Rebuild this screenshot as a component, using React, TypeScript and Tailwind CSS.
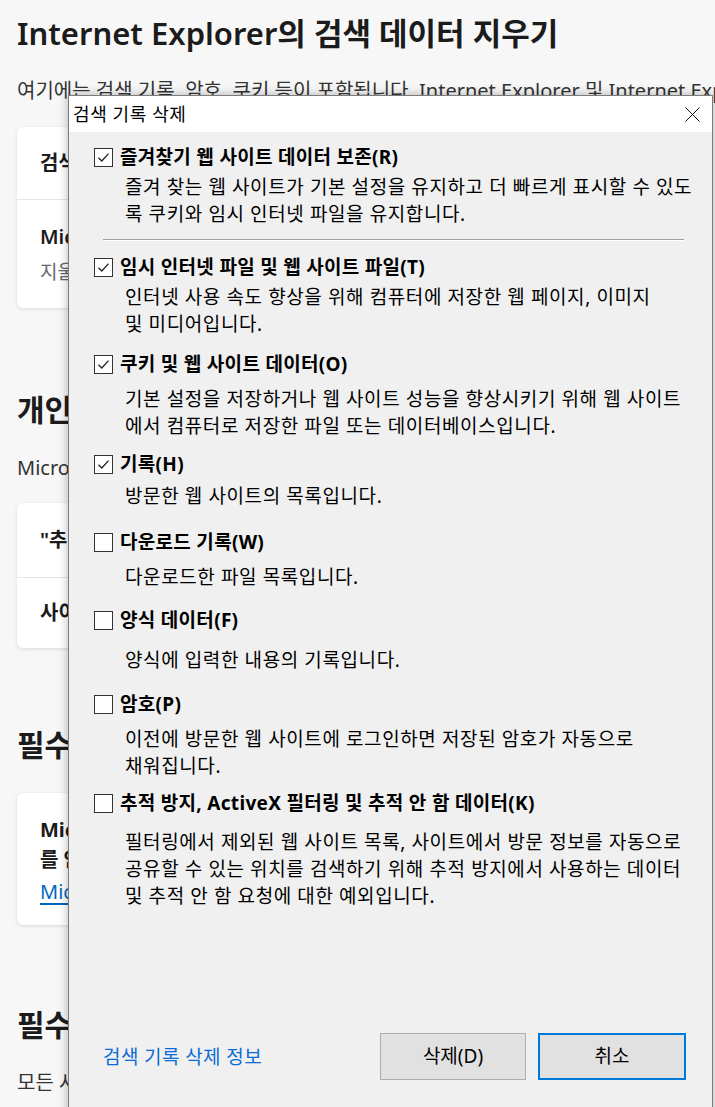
import React from 'react';

type Item = {
  label: string;
  checked: boolean;
  lines: string[];
  rowGap: string;
  descGap: string;
};

const items: Item[] = [
  {
    label: '즐겨찾기 웹 사이트 데이터 보존(R)',
    checked: true,
    lines: [
      '즐겨 찾는 웹 사이트가 기본 설정을 유지하고 더 빠르게 표시할 수 있도',
      '록 쿠키와 임시 인터넷 파일을 유지합니다.',
    ],
    rowGap: 'mt-[13px]',
    descGap: 'mt-[5px]',
  },
  {
    label: '임시 인터넷 파일 및 웹 사이트 파일(T)',
    checked: true,
    lines: ['인터넷 사용 속도 향상을 위해 컴퓨터에 저장한 웹 페이지, 이미지', '및 미디어입니다.'],
    rowGap: 'mt-[14px]',
    descGap: 'mt-[5px]',
  },
  {
    label: '쿠키 및 웹 사이트 데이터(O)',
    checked: true,
    lines: [
      '기본 설정을 저장하거나 웹 사이트 성능을 향상시키기 위해 웹 사이트',
      '에서 컴퓨터로 저장한 파일 또는 데이터베이스입니다.',
    ],
    rowGap: 'mt-[14px]',
    descGap: 'mt-[10px]',
  },
  {
    label: '기록(H)',
    checked: true,
    lines: ['방문한 웹 사이트의 목록입니다.'],
    rowGap: 'mt-[12px]',
    descGap: 'mt-[7px]',
  },
  {
    label: '다운로드 기록(W)',
    checked: false,
    lines: ['다운로드한 파일 목록입니다.'],
    rowGap: 'mt-[20px]',
    descGap: 'mt-[10px]',
  },
  {
    label: '양식 데이터(F)',
    checked: false,
    lines: ['양식에 입력한 내용의 기록입니다.'],
    rowGap: 'mt-[17px]',
    descGap: 'mt-[15px]',
  },
  {
    label: '암호(P)',
    checked: false,
    lines: ['이전에 방문한 웹 사이트에 로그인하면 저장된 암호가 자동으로', '채워집니다.'],
    rowGap: 'mt-[18px]',
    descGap: 'mt-[10px]',
  },
  {
    label: '추적 방지, ActiveX 필터링 및 추적 안 함 데이터(K)',
    checked: false,
    lines: [
      '필터링에서 제외된 웹 사이트 목록, 사이트에서 방문 정보를 자동으로',
      '공유할 수 있는 위치를 검색하기 위해 추적 방지에서 사용하는 데이터',
      '및 추적 안 함 요청에 대한 예외입니다.',
    ],
    rowGap: 'mt-[11px]',
    descGap: 'mt-[14px]',
  },
];

function CheckBox({ checked }: { checked: boolean }) {
  return (
    <span className="flex h-[19px] w-[19px] shrink-0 items-center justify-center border border-[#333] bg-white">
      {checked && (
        <svg width="15" height="15" viewBox="0 0 15 15" fill="none">
          <path d="M2.5 7.8 L5.8 11 L12.5 3.6" stroke="#222" strokeWidth="1.3" />
        </svg>
      )}
    </span>
  );
}

function Option({ item, separator }: { item: Item; separator?: boolean }) {
  return (
    <div>
      <div className={`${item.rowGap} flex h-[24px] items-center pl-[25px]`}>
        <CheckBox checked={item.checked} />
        <span className="ml-[7px] whitespace-nowrap text-[19px] font-bold leading-[24px] tracking-[0.3px]">
          {item.label}
        </span>
      </div>
      <div className={`${item.descGap} pl-[56px] text-[19px] leading-[27px] tracking-[0.6px]`}>
        {item.lines.map((l) => (
          <div key={l} className="whitespace-nowrap">
            {l}
          </div>
        ))}
      </div>
      {separator && (
        <div className="ml-[34px] mt-[11px] w-[581px] border-t border-b border-t-[#a0a0a0] border-b-white" />
      )}
    </div>
  );
}

function Card({ children, className = '' }: { children: React.ReactNode; className?: string }) {
  return (
    <div className={`w-[681px] rounded-[6px] bg-white shadow-[0_1px_4px_rgba(0,0,0,0.12)] ${className}`}>
      {children}
    </div>
  );
}

export default function App() {
  return (
    <div className="relative h-[1107px] w-[715px] overflow-hidden bg-[#f7f7f7] font-['Noto_Sans','Noto_Sans_CJK_KR',sans-serif] text-[#1b1b1b]">
      {/* settings page behind the dialog */}
      <div className="pl-[17px] pt-[12px]">
        <h1 className="whitespace-nowrap text-[31px] font-semibold leading-[42px]">
          Internet Explorer의 검색 데이터 지우기
        </h1>
        <p className="mt-[24px] whitespace-nowrap text-[20px] leading-[26px] text-[#333]">
          여기에는 검색 기록, 암호, 쿠키 등이 포함됩니다. Internet Explorer 및 Internet Explorer 모드의 데이터가 지워집니다.
        </p>

        <Card className="mt-[23px]">
          <div className="flex h-[72px] items-center pl-[23px] text-[20px] font-semibold">검색 데이터 지금 지우기</div>
          <div className="border-t border-[#e5e5e5]" />
          <div className="flex h-[108px] flex-col justify-center pl-[23px]">
            <div className="whitespace-nowrap text-[20px] font-semibold leading-[28px]">
              Microsoft Edge를 닫을 때마다 Internet Explorer 검색 데이터 지우기
            </div>
            <div className="mt-[8px] whitespace-nowrap text-[19px] leading-[26px] text-[#666]">
              지울 항목을 선택하세요
            </div>
          </div>
        </Card>

        <h2 className="mt-[82px] whitespace-nowrap text-[30px] font-bold leading-[40px]">개인 정보</h2>
        <p className="mt-[25px] whitespace-nowrap text-[20px] leading-[26px] text-[#333]">
          Microsoft는 사용자의 개인 정보를 보호하고 존중합니다.
        </p>

        <Card className="mt-[22px]">
          <div className="flex h-[74px] items-center pl-[23px] text-[20px] font-semibold">"추적 안 함" 요청 보내기</div>
          <div className="border-t border-[#e5e5e5]" />
          <div className="flex h-[70px] items-center pl-[23px] text-[20px] font-semibold">
            사이트에서 저장된 결제 방법이 있는지 확인하도록 허용
          </div>
        </Card>

        <h2 className="mt-[77px] whitespace-nowrap text-[30px] font-bold leading-[40px]">필수 진단 데이터</h2>

        <Card className="mt-[28px] pb-[20px] pl-[23px] pt-[22px]">
          <div className="text-[20px] font-bold leading-[30px]">
            <div className="whitespace-nowrap">Microsoft는 필수 진단 데이터를 수집하여 Microsoft Edge</div>
            <div className="whitespace-nowrap">를 안전하게 유지합니다.</div>
          </div>
          <a className="mt-[4px] block w-fit text-[20px] leading-[26px] text-[#0067c0] underline underline-offset-4">
            Microsoft 개인정보처리방침
          </a>
        </Card>

        <h2 className="mt-[80px] whitespace-nowrap text-[30px] font-bold leading-[40px]">필수 진단 데이터</h2>
        <p className="mt-[25px] whitespace-nowrap text-[20px] leading-[26px] text-[#333]">
          모든 사용자에게 적용되는 설정입니다.
        </p>
      </div>

      {/* Win32 dialog */}
      <div className="absolute left-[68px] top-[95px] h-[1040px] w-[645px] border border-[#7a7a7a] bg-[#f0f0f0] font-['Noto_Sans','Noto_Sans_CJK_KR',sans-serif] text-black shadow-[0_0_10px_rgba(0,0,0,0.28)]">
        <div className="flex h-[36px] items-center justify-between bg-white pl-[4px] pr-[12px]">
          <span className="text-[18px] leading-[24px] tracking-[0.6px]">검색 기록 삭제</span>
          <svg width="15" height="15" viewBox="0 0 15 15" fill="none">
            <path d="M0.5 0.5 L14.5 14.5 M14.5 0.5 L0.5 14.5" stroke="#111" strokeWidth="1" />
          </svg>
        </div>

        {items.map((it, i) => (
          <Option key={it.label} item={it} separator={i === 0} />
        ))}

        <div className="mt-[123px] flex items-center pl-[34px] pr-[26px]">
          <a className="text-[19px] leading-[26px] tracking-[0.4px] text-[#0a6cd6]">검색 기록 삭제 정보</a>
          <div className="ml-auto flex gap-[12px]">
            <button className="h-[47px] w-[146px] border border-[#adadad] bg-[#e1e1e1] text-[19px]">삭제(D)</button>
            <button className="h-[47px] w-[148px] border-2 border-[#0078d7] bg-[#e1e1e1] text-[19px]">취소</button>
          </div>
        </div>
      </div>
    </div>
  );
}
